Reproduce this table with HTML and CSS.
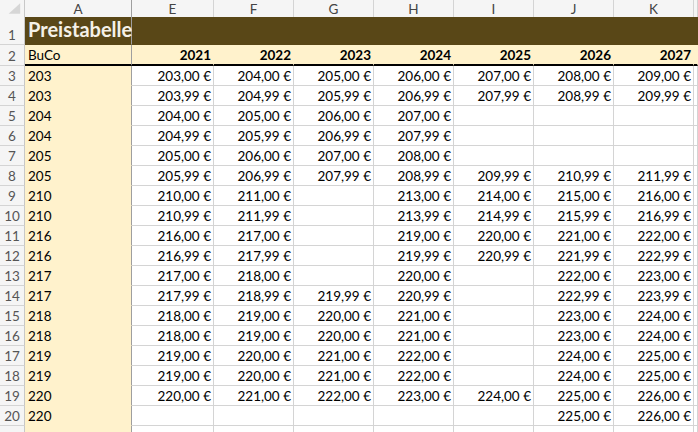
FILE: index.html
```html
<!DOCTYPE html>
<html>
<head>
<meta charset="utf-8">
<link rel="stylesheet" href="styles.css">
</head>
<body>
<div class="sheet">
  <div class="row colhdr">
    <div class="corner"><svg width="25" height="17" viewBox="0 0 25 17"><polygon points="21,3 21,14 9,14" fill="#d6d6d6"/></svg></div>
    <div class="ch">A</div><div class="ch">E</div><div class="ch">F</div><div class="ch">G</div><div class="ch">H</div><div class="ch">I</div><div class="ch">J</div><div class="ch">K</div><div class="ch last"></div>
  </div>
  <div class="row r1">
    <div class="rh">1</div>
    <div class="c a title">Preistabelle</div>
    <div class="c"></div><div class="c"></div><div class="c"></div><div class="c"></div><div class="c"></div><div class="c"></div><div class="c"></div><div class="c"></div>
  </div>
  <div class="row r2">
    <div class="rh">2</div>
    <div class="c a">BuCo</div>
    <div class="c n">2021</div><div class="c n">2022</div><div class="c n">2023</div><div class="c n">2024</div><div class="c n">2025</div><div class="c n">2026</div><div class="c n">2027</div><div class="c"></div>
  </div>
  <div class="row"><div class="rh">3</div><div class="c a">203</div><div class="c n">203,00 €</div><div class="c n">204,00 €</div><div class="c n">205,00 €</div><div class="c n">206,00 €</div><div class="c n">207,00 €</div><div class="c n">208,00 €</div><div class="c n">209,00 €</div><div class="c"></div></div>
  <div class="row"><div class="rh">4</div><div class="c a">203</div><div class="c n">203,99 €</div><div class="c n">204,99 €</div><div class="c n">205,99 €</div><div class="c n">206,99 €</div><div class="c n">207,99 €</div><div class="c n">208,99 €</div><div class="c n">209,99 €</div><div class="c"></div></div>
  <div class="row"><div class="rh">5</div><div class="c a">204</div><div class="c n">204,00 €</div><div class="c n">205,00 €</div><div class="c n">206,00 €</div><div class="c n">207,00 €</div><div class="c n"></div><div class="c n"></div><div class="c n"></div><div class="c"></div></div>
  <div class="row"><div class="rh">6</div><div class="c a">204</div><div class="c n">204,99 €</div><div class="c n">205,99 €</div><div class="c n">206,99 €</div><div class="c n">207,99 €</div><div class="c n"></div><div class="c n"></div><div class="c n"></div><div class="c"></div></div>
  <div class="row"><div class="rh">7</div><div class="c a">205</div><div class="c n">205,00 €</div><div class="c n">206,00 €</div><div class="c n">207,00 €</div><div class="c n">208,00 €</div><div class="c n"></div><div class="c n"></div><div class="c n"></div><div class="c"></div></div>
  <div class="row"><div class="rh">8</div><div class="c a">205</div><div class="c n">205,99 €</div><div class="c n">206,99 €</div><div class="c n">207,99 €</div><div class="c n">208,99 €</div><div class="c n">209,99 €</div><div class="c n">210,99 €</div><div class="c n">211,99 €</div><div class="c"></div></div>
  <div class="row"><div class="rh">9</div><div class="c a">210</div><div class="c n">210,00 €</div><div class="c n">211,00 €</div><div class="c n"></div><div class="c n">213,00 €</div><div class="c n">214,00 €</div><div class="c n">215,00 €</div><div class="c n">216,00 €</div><div class="c"></div></div>
  <div class="row"><div class="rh">10</div><div class="c a">210</div><div class="c n">210,99 €</div><div class="c n">211,99 €</div><div class="c n"></div><div class="c n">213,99 €</div><div class="c n">214,99 €</div><div class="c n">215,99 €</div><div class="c n">216,99 €</div><div class="c"></div></div>
  <div class="row"><div class="rh">11</div><div class="c a">216</div><div class="c n">216,00 €</div><div class="c n">217,00 €</div><div class="c n"></div><div class="c n">219,00 €</div><div class="c n">220,00 €</div><div class="c n">221,00 €</div><div class="c n">222,00 €</div><div class="c"></div></div>
  <div class="row"><div class="rh">12</div><div class="c a">216</div><div class="c n">216,99 €</div><div class="c n">217,99 €</div><div class="c n"></div><div class="c n">219,99 €</div><div class="c n">220,99 €</div><div class="c n">221,99 €</div><div class="c n">222,99 €</div><div class="c"></div></div>
  <div class="row"><div class="rh">13</div><div class="c a">217</div><div class="c n">217,00 €</div><div class="c n">218,00 €</div><div class="c n"></div><div class="c n">220,00 €</div><div class="c n"></div><div class="c n">222,00 €</div><div class="c n">223,00 €</div><div class="c"></div></div>
  <div class="row"><div class="rh">14</div><div class="c a">217</div><div class="c n">217,99 €</div><div class="c n">218,99 €</div><div class="c n">219,99 €</div><div class="c n">220,99 €</div><div class="c n"></div><div class="c n">222,99 €</div><div class="c n">223,99 €</div><div class="c"></div></div>
  <div class="row"><div class="rh">15</div><div class="c a">218</div><div class="c n">218,00 €</div><div class="c n">219,00 €</div><div class="c n">220,00 €</div><div class="c n">221,00 €</div><div class="c n"></div><div class="c n">223,00 €</div><div class="c n">224,00 €</div><div class="c"></div></div>
  <div class="row"><div class="rh">16</div><div class="c a">218</div><div class="c n">218,00 €</div><div class="c n">219,00 €</div><div class="c n">220,00 €</div><div class="c n">221,00 €</div><div class="c n"></div><div class="c n">223,00 €</div><div class="c n">224,00 €</div><div class="c"></div></div>
  <div class="row"><div class="rh">17</div><div class="c a">219</div><div class="c n">219,00 €</div><div class="c n">220,00 €</div><div class="c n">221,00 €</div><div class="c n">222,00 €</div><div class="c n"></div><div class="c n">224,00 €</div><div class="c n">225,00 €</div><div class="c"></div></div>
  <div class="row"><div class="rh">18</div><div class="c a">219</div><div class="c n">219,00 €</div><div class="c n">220,00 €</div><div class="c n">221,00 €</div><div class="c n">222,00 €</div><div class="c n"></div><div class="c n">224,00 €</div><div class="c n">225,00 €</div><div class="c"></div></div>
  <div class="row"><div class="rh">19</div><div class="c a">220</div><div class="c n">220,00 €</div><div class="c n">221,00 €</div><div class="c n">222,00 €</div><div class="c n">223,00 €</div><div class="c n">224,00 €</div><div class="c n">225,00 €</div><div class="c n">226,00 €</div><div class="c"></div></div>
  <div class="row"><div class="rh">20</div><div class="c a">220</div><div class="c n"></div><div class="c n"></div><div class="c n"></div><div class="c n"></div><div class="c n"></div><div class="c n">225,00 €</div><div class="c n">226,00 €</div><div class="c"></div></div>
  <div class="row"><div class="rh"></div><div class="c a"></div><div class="c n"></div><div class="c n"></div><div class="c n"></div><div class="c n"></div><div class="c n"></div><div class="c n"></div><div class="c n"></div><div class="c"></div></div>
</div>
</body>
</html>
```
FILE: styles.css
```css
html, body {
  margin: 0;
  padding: 0;
  background: #ffffff;
}
.sheet {
  width: 698px;
  height: 432px;
  overflow: hidden;
  font-family: Lato, "Open Sans", sans-serif;
  font-size: 13.5px;
  color: #000;
}
.row {
  display: grid;
  grid-template-columns: 25px 107px 82px repeat(6, 80px) 1fr;
  height: 20px;
}
.row > div {
  box-sizing: border-box;
  border-right: 1px solid #d4d4d4;
  border-bottom: 1px solid #d4d4d4;
  display: flex;
  align-items: flex-end;
  padding-bottom: 1px;
  white-space: nowrap;
  overflow: visible;
}
.colhdr {
  height: 17px;
}
.colhdr > div {
  background: #f5f5f5;
  border-bottom: 1px solid #b8b8b8;
  color: #444;
  justify-content: center;
  align-items: center;
  padding-bottom: 0;
  font-size: 13.5px;
}
.colhdr .corner {
  padding: 0;
  border-right: 1px solid #c8c8c8;
}
.corner svg { display: block; }
.colhdr .ch:nth-child(2) { border-right: 1px solid #9f9f9f; }
.rh {
  background: #f5f5f5;
  color: #555;
  justify-content: center;
  border-right: 1px solid #c8c8c8 !important;
}
.c.n {
  justify-content: flex-end;
  padding-right: 2px;
}
.c.a {
  background: #fff2cc;
  border-bottom-color: #fff2cc;
  border-right: 1px solid #9f9f9f;
  padding-left: 3px;
}
.r1 { height: 28px; }
.r1 > .c {
  background: #594717;
  border-right-color: #594717;
  border-bottom-color: #594717;
}
.r1 > .c.a {
  border-right-color: #9f9f9f;
}
.title {
  color: #f4f1e8;
  font-weight: 700;
  font-size: 20px;
  padding-bottom: 3px !important;
}
.r2 { height: 21px; }
.r2 > .c {
  background: #fff2cc;
  border-right-color: #fff2cc;
  border-bottom: 2px solid #000;
}
.r2 > .c.a { border-right-color: #9f9f9f; border-bottom: 2px solid #000; }
.r2 > .c.n { font-weight: 700; }
```
